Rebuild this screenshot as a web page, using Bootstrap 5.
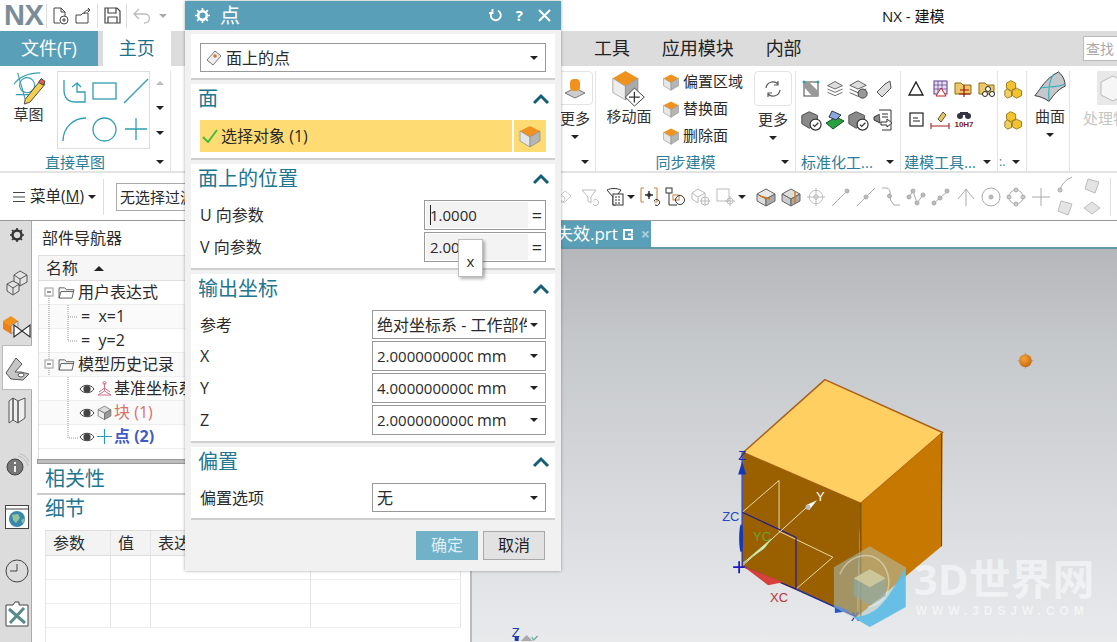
<!DOCTYPE html>
<html lang="zh">
<head>
<meta charset="utf-8">
<title>NX - 建模</title>
<link href="https://cdn.jsdelivr.net/npm/bootstrap@5.3.0/dist/css/bootstrap.min.css" rel="stylesheet">
<style>
html,body{margin:0;width:1117px;height:642px;overflow:hidden;background:#fff}
body,.app{font-family:"Open Sans","Noto Sans CJK SC",sans-serif;color:#2a2a2a;font-size:15px}
.app{position:relative;width:1117px;height:642px;overflow:hidden}
svg{display:block;flex:none}
.tbar{height:31px;background:#fff;align-items:center}
.nx-logo{font:bold 29px "Liberation Sans",sans-serif;color:#7b8c99;width:46px;padding-left:4px;letter-spacing:-.5px}
.tb-sep{width:1px;height:24px;background:#ddd;margin:0 6px}
.tb-new{margin-left:5px}
.tb-open{margin-left:6px}
.tb-sep2{margin:0 6px 0 5px}
.tb-title{position:absolute;left:882px;top:5px;font-size:15px;color:#111;line-height:22px}
.tabsrow{height:35px;background:#dcdcdc;align-items:stretch;font-size:18px}
.tab-file{width:98px;background:#5a9fb8;color:#fff;text-align:center;line-height:35px}
.tab-home{width:68px;margin-left:5px;background:#fff;color:#1f6f86;text-align:center;line-height:35px}
.tab-gap{width:424px}
.tab-item{line-height:35px;color:#222}
.t1{width:68px}.t2{width:104px}.t3{width:318px}
.findbox{width:34px;height:25px;margin-top:5px;background:#fff;border:1px solid #bbb;border-right:0;color:#aaa;font-size:14px;line-height:23px;padding-left:2px;overflow:hidden;white-space:nowrap}
.ribbon{height:107px;background:#fff;border-bottom:2px solid #e3e3e3}
.rg{display:flex;flex-direction:column;margin-top:5px;border-right:1px solid #e2e2e2;height:100px;flex:none}
.rb{flex:1;display:flex;min-height:0}
.rl{height:18px;display:flex;align-items:center;justify-content:center;color:#2d7d98;font-size:15px;line-height:18px;position:relative;white-space:nowrap}
.rl .crt{position:absolute;right:6px;top:7px}
.rl-pr{padding-right:20px}
.crt{display:inline-block;width:0;height:0;border-left:4px solid transparent;border-right:4px solid transparent;border-top:4px solid #222;flex:none}
.rlabel{font-size:15px;line-height:18px;text-align:center;color:#333}
.g0{width:171px;border-right:1px solid #e2e2e2}
.g-hide{width:384px;flex:none}
.g1{width:41px}.g2{width:200px}.g3{width:105px}.g4{width:97px}.g5{width:29px}.g6{width:43px}.g7{width:47px;border:0}
.igrid{display:grid;grid-auto-rows:31px;align-items:center;justify-items:center;padding-top:2px}
.ig3{grid-template-columns:24px 23px 23px 30px;padding-left:3px}
.ig4{grid-template-columns:repeat(4,24px);padding-left:3px}
.ig5{grid-template-columns:24px;padding-left:4px}
.morebtn{width:36px;height:34px;border:1px solid #e3e3e3;border-radius:4px;display:flex;align-items:center;justify-content:center}
.vcol{display:flex;flex-direction:column;align-items:center}
.gallery{width:93px;height:78px;border:1px solid #ddd;display:grid;grid-template-columns:repeat(3,31px);grid-auto-rows:38px;align-items:center;justify-items:center}
.syncline{display:flex;align-items:center;gap:3px;font-size:15px;height:27px;line-height:27px;white-space:nowrap}
.toolrow{height:48px;background:#fff;border-bottom:1px solid #999;align-items:center}
.menu-lab{font-size:15.5px;white-space:nowrap}
.filter{width:70px;height:28px;border:1px solid #aaa;margin-left:8px;font-size:15px;line-height:26px;padding-left:3px;overflow:hidden;white-space:nowrap;flex:none}
.toolicons{display:flex;align-items:center;margin-left:366px}
.tc{width:25px;display:flex;justify-content:center;flex:none}
.tc2{display:grid;grid-template-columns:27px 27px;grid-auto-rows:22px;justify-items:center;align-items:center;flex:none;margin-left:-2px}
.tvsep{width:1px;height:38px;background:#ddd;margin-left:5px;flex:none}
.main{height:421px;position:relative}
.side{width:32px;background:#dcdcdc;border-right:1px solid #aaa;flex:none}
.sbi{display:flex;align-items:center;justify-content:center;margin-left:2px}
.sbi.on{background:#fff;border:1px solid #bbb;border-right:0;margin-right:-1px;position:relative}
.s0{height:27px}.s1{height:48px;margin-top:11px}.s2{height:38px}.s3{height:45px}.s4{height:40px}.s5{height:46px;margin-top:12px}.s6{height:58px}.s7{height:50px}.s8{height:36px}
.navp{width:440px;flex:none;background:#fff;border-right:2px solid #bbb;display:flex;flex-direction:column;padding-left:6px}
.navh{height:34px;line-height:34px;padding-left:4px;font-size:16px}
.tree{height:204px;position:relative;border-left:1px solid #ddd;border-top:1px solid #ddd;flex:none}
.thead{height:25px;background:#f6f6f6;border-bottom:1px solid #ddd;display:flex;align-items:center;padding-left:7px;font-size:16px;gap:16px}
.tup{width:0;height:0;border-left:5px solid transparent;border-right:5px solid transparent;border-bottom:5px solid #222}
.trow{height:24px;border-bottom:1px solid #eee;display:flex;align-items:center;line-height:23px;font-size:16px;white-space:nowrap}
.trow.alt{background:#fafafa}
.p1{padding-left:19px;gap:3px}.p2{padding-left:42px;gap:7px}.p3{padding-left:40px;gap:1px}
.red{color:#d9706c}.blu{color:#3f5bc4;font-weight:700}
.splt{height:5px;background:#bdbdbd;border:1px solid #999;margin-left:-1px;flex:none}
.sec-head{color:#24758f;font-size:20px;line-height:26px;padding-left:7px;flex:none}
.sec-b1{height:31px;border-bottom:2px solid #ccc;margin-left:-1px;padding-left:8px;padding-top:2px}
.sec-b2{height:35px;padding-top:1px}
.dettable{margin-left:7px;margin-right:9px;flex:1;border-left:1px solid #e5e5e5;border-top:1px solid #ddd;position:relative;overflow:hidden}
.dr{display:grid;grid-template-columns:65px 40px 160px 1fr;height:24px;border-bottom:1px solid #eee}
.dr>div{border-right:1px solid #e5e5e5;padding-left:7px;line-height:24px;font-size:16px;overflow:hidden;white-space:nowrap}
.dr.hd{background:#f3f3f3;height:25px;border-bottom:1px solid #ddd}
.viewc{flex:1;display:flex;flex-direction:column;min-width:0}
.vtabs{height:26px;background:#fff;flex:none}
.vtab{width:179px;height:26px;background:#5a9fb8;color:#fff;font-size:17px;display:flex;align-items:center;justify-content:flex-end;padding-right:1px;gap:5px;white-space:nowrap;line-height:26px}
.vtab b{color:#a9cfdc;font-weight:700;font-size:16px;margin-left:2px}
.vbar{height:2px;background:#5d97a8;flex:none}
.view3d{flex:1;background:linear-gradient(#b5b7ba,#c6c9cc 25%,#e8eaec)}
.dlg{position:absolute;left:185px;top:1px;width:376px;height:570px;background:#f1f1f1;box-shadow:0 0 3px rgba(0,0,0,.35);z-index:5;display:flex;flex-direction:column}
.dlgh{height:29px;background:#5a9fb8;color:#fff;display:flex;align-items:center;padding:0 10px;font-size:20px;flex:none}
.dlgh .ttl{margin-left:10px;line-height:29px}
.dlgb{padding:4px 6px 0;display:flex;flex-direction:column;gap:4px;flex:none}
.dsec{background:#fff;border-bottom:2px solid #cfcfcf;padding:0 9px 6px}
.dsh{height:36px;display:flex;align-items:center;justify-content:space-between;color:#24758f;font-size:20px;margin-left:-2px;padding-bottom:6px}
.dsh svg{margin-right:-4px}
.drow{display:flex;align-items:center;justify-content:space-between;margin-bottom:2px;font-size:16px}
.drow:last-child{margin-bottom:0}
.dbox{height:30px;border:1px solid #999;background:#fff;display:flex;align-items:center;font-size:16px;white-space:nowrap;overflow:hidden}
.dbox .crt{margin-left:auto;margin-right:7px}
.w-full{width:100%;padding-left:5px}
.w-sel{width:174px;padding-left:4px}
.clipv{overflow:hidden;width:96px;flex:none;font-size:15px}
.clipr{overflow:hidden;width:150px;flex:none}
.w-in{width:122px;padding:1px 0 1px 1px}
.ifld{width:102px;height:26px;background:#f3f3f3;padding-left:4px;line-height:26px;flex:none;position:relative;font-size:15px}
.caretl{display:inline-block;width:1px;height:20px;background:#222;vertical-align:-4px;margin-right:-1px}
.eq{width:18px;text-align:center;flex:none;font-size:18px}
.selrow{height:32px;display:flex;gap:2px;margin-left:0}
.selmain{width:312px;background:#ffdc73;display:flex;align-items:center;padding-left:2px;gap:3px;font-size:16px}
.selbtn{width:32px;background:#ffdc73;display:flex;align-items:center;justify-content:center}
.dfoot{display:flex;justify-content:flex-end;gap:5px;padding:11px 16px 0 0}
.dbtn{width:62px;height:29px;font-size:16px;line-height:27px;text-align:center;padding:0;border-radius:0;border:1px solid #a9a9a9;background:#e2e2e2;color:#222}
.dbtn.ok{background:#72b2c9;border-color:#72b2c9;color:#dff0f6}
.ttip{position:absolute;left:273px;top:238px;width:25px;height:38px;background:#fff;border:1px solid #bbb;box-shadow:2px 2px 3px rgba(0,0,0,.3);text-align:center;line-height:42px;font-size:15px;z-index:6}
.sv3d{width:645px;height:392px}
.wm1{font:700 42px "Open Sans","Noto Sans CJK SC",sans-serif;fill:#fff;fill-opacity:.5}
.wm2{font:700 12px "Liberation Sans",sans-serif;fill:#fff;fill-opacity:.55;letter-spacing:5px}
.ax{font:13px "Liberation Sans",sans-serif}
</style>
</head>
<body>
<svg width="0" height="0" style="position:absolute">
 <defs>
  <symbol id="cube" viewBox="0 0 24 24"><path d="M12 2 22 7 12 13 2 7Z" fill="#f0921e"/><path d="M2 7 12 13V23L2 17Z" fill="#e6e6e6" stroke="#888" stroke-width=".7"/><path d="M22 7 12 13V23L22 17Z" fill="#b5b5b5" stroke="#888" stroke-width=".7"/></symbol>
  <symbol id="gcube" viewBox="0 0 24 24"><path d="M12 3 21 8 12 13 3 8Z" fill="#ddd" stroke="#666"/><path d="M3 8 12 13V22L3 17Z" fill="#eee" stroke="#666"/><path d="M21 8 12 13V22L21 17Z" fill="#999" stroke="#666"/></symbol>
  <symbol id="ycube" viewBox="0 0 24 24"><path d="M8 2l6 3v6l-6 3-5-3V5z" fill="#f4c430" stroke="#8a6d10"/><path d="M4 12l5 3v6l-5 2-3-3v-6z" fill="#f0d060" stroke="#8a6d10"/><path d="M15 11l6 3v6l-6 3-5-3v-6z" fill="#f4c430" stroke="#8a6d10"/></symbol>
  <symbol id="stack" viewBox="0 0 24 24" fill="#ddd" stroke="#555"><path d="M12 3 21 8 12 12 3 8Z"/><path d="M3 12 12 16 21 12" fill="none"/><path d="M3 16 12 20 21 16" fill="none"/></symbol>
  <symbol id="gbadge" viewBox="0 0 24 24"><path d="M10 3 19 7V16L10 21 2 16V7Z" fill="#8a8a8a" stroke="#444"/><circle cx="17" cy="17" r="6" fill="#fff" stroke="#333" stroke-width="1.3"/><path d="M14 17l2 2 4-4" fill="none" stroke="#333" stroke-width="1.3"/></symbol>
  <symbol id="eye" viewBox="0 0 16 12"><path d="M1 6C4 1 12 1 15 6 12 11 4 11 1 6Z" fill="#fff" stroke="#444"/><circle cx="8" cy="6" r="3.6" fill="#444"/></symbol>
  <symbol id="folder" viewBox="0 0 18 14" fill="none" stroke="#555"><path d="M1 13V2H7L9 4H17L15 13ZM1 13 3 6H17"/></symbol>
  <symbol id="chev" viewBox="0 0 18 12"><path d="M2 10 9 3 16 10" fill="none" stroke="#175f78" stroke-width="3"/></symbol>
  <symbol id="gcross" viewBox="0 0 24 24" fill="none" stroke="#aaa"><circle cx="12" cy="12" r="9"/><path d="M12 0V24M0 12H24"/><circle cx="12" cy="12" r="3"/></symbol>
 </defs>
</svg>
<div class="app">
 <div class="tbar d-flex">
  <div class="nx-logo">NX</div>
  <div class="tb-sep m-0"></div>
  <svg width="17" height="18" class="tb-new" viewBox="0 0 17 18" fill="none" stroke="#444"><path d="M2 1H9L13 5V9M9 1V5H13M8 16H2V1"/><circle cx="12" cy="13" r="4"/><path d="M10 13H14M12 11V15"/></svg>
  <svg width="17" height="18" class="tb-open" viewBox="0 0 17 18" fill="none" stroke="#444"><path d="M1 8H6L8 6H13V16H1Z"/><path d="M9 7C10 3 12 3 15 3M13 1l2 2-2 2"/></svg>
  <div class="tb-sep tb-sep2"></div>
  <svg width="17" height="17" viewBox="0 0 17 17" fill="none" stroke="#444" stroke-width="1.2"><path d="M1 1H13L16 4V16H1ZM4 1V6H12V1M4 16V10H13V16"/></svg>
  <div class="tb-sep tb-sep2"></div>
  <svg width="18" height="16" viewBox="0 0 18 16" fill="none" stroke="#bbb" stroke-width="1.3"><path d="M6 1 1 6 6 11M1 6H12C18 6 18 15 11 15"/></svg>
  <span class="crt ms-2" style="border-top-color:#aaa"></span>
 </div>
 <div class="tb-title">NX - 建模</div>
 <div class="tabsrow d-flex">
  <div class="tab-file">文件(F)</div>
  <div class="tab-home">主页</div>
  <div class="tab-gap"></div>
  <div class="tab-item t1">工具</div>
  <div class="tab-item t2">应用模块</div>
  <div class="tab-item t3">内部</div>
  <div class="findbox">查找</div>
 </div>
 <div class="ribbon d-flex">
  <div class="rg g0">
   <div class="rb">
    <div class="vcol" style="width:57px">
     <svg width="34" height="34" viewBox="0 0 36 36"><g fill="none" stroke="#3a9db0" stroke-width="1.2"><path d="M2 14C8 6 18 2 30 2"/><circle cx="16" cy="15" r="8"/><path d="M6 2 14 30M4 25H26"/></g><path d="M14 30 30 10 35 14 19 33 13 35Z" fill="#f5cf50" stroke="#444"/><path d="M28 12 31 8 35 11 33 15Z" fill="#d8605a" stroke="#444"/></svg>
     <div class="rlabel">草图</div>
    </div>
    <div class="gallery">
     <svg width="24" height="26" viewBox="0 0 24 26" fill="none" stroke="#2f9db2" stroke-width="1.3"><path d="M2 2V12Q2 24 14 24H23V14H15V5L10 9M15 5l4 4"/></svg>
     <svg width="25" height="18" viewBox="0 0 25 18" fill="none" stroke="#2f9db2" stroke-width="1.3"><rect x="1" y="1" width="23" height="16"/></svg>
     <svg width="26" height="26" viewBox="0 0 26 26" fill="none" stroke="#2f9db2" stroke-width="1.3"><path d="M1 25 25 1"/></svg>
     <svg width="26" height="26" viewBox="0 0 26 26" fill="none" stroke="#2f9db2" stroke-width="1.3"><path d="M2 25C2 12 12 2 25 2"/></svg>
     <svg width="25" height="25" viewBox="0 0 25 25" fill="none" stroke="#2f9db2" stroke-width="1.3"><circle cx="12.5" cy="12.5" r="11.5"/></svg>
     <svg width="22" height="22" viewBox="0 0 22 22" fill="none" stroke="#2f9db2" stroke-width="1.3"><path d="M11 0V22M0 11H22"/></svg>
    </div>
    <div class="vcol" style="width:20px;gap:21px;padding-top:10px">
     <span class="crt" style="transform:rotate(180deg);border-top-color:#bbb"></span>
     <span class="crt"></span>
     <span class="crt"></span>
    </div>
   </div>
   <div class="rl rl-pr">直接草图<span class="crt"></span></div>
  </div>
  <div class="g-hide"></div>
  <div class="rg g1">
   <div class="rb"><div class="vcol w-100">
    <div class="morebtn"><svg width="24" height="24" viewBox="0 0 24 24"><path d="M12 12 22 17 12 22 2 17Z" fill="#ccc" stroke="#777"/><rect x="7" y="3" width="10" height="12" rx="4" fill="#f0921e"/></svg></div>
    <div class="rlabel mt-1">更多</div><span class="crt mt-2"></span></div></div>
   <div class="rl"><span class="crt"></span></div>
  </div>
  <div class="rg g2">
   <div class="rb">
    <div class="vcol" style="width:66px">
     <svg width="36" height="36" viewBox="0 0 36 40"><path d="M14 0 28 8 14 17 0 8Z" fill="#f0921e"/><path d="M0 8 14 17V32L0 24Z" fill="#eee" stroke="#888" stroke-width=".7"/><path d="M28 8 14 17V32L28 24Z" fill="#aaa" stroke="#888" stroke-width=".7"/><path d="M24 19 35 29 24 39 14 29Z" fill="#fff" stroke="#333"/><path d="M24 23V35M18 29H30" stroke="#333" stroke-width="1.4"/></svg>
     <div class="rlabel">移动面</div>
    </div>
    <div style="width:92px;margin-top:-3px">
     <div class="syncline"><svg width="18" height="18"><use href="#cube"/></svg>偏置区域</div>
     <div class="syncline"><svg width="18" height="18"><use href="#cube"/></svg>替换面</div>
     <div class="syncline"><svg width="18" height="18"><use href="#cube"/></svg>删除面</div>
    </div>
    <div class="vcol" style="width:38px">
     <div class="morebtn" style="width:38px;height:35px"><svg width="16" height="18" viewBox="0 0 16 18" fill="none" stroke="#555" stroke-width="1.2"><path d="M1 8A7 7 0 0 1 13 4M15 10A7 7 0 0 1 3 14M13 1V5H9M3 17V13H7"/></svg></div>
     <div class="rlabel mt-1">更多</div><span class="crt mt-2"></span>
    </div>
   </div>
   <div class="rl rl-pr">同步建模<span class="crt"></span></div>
  </div>
  <div class="rg g3">
   <div class="rb"><div class="igrid ig3">
    <svg width="20" height="20" viewBox="0 0 20 20"><rect x="3" y="3" width="14" height="14" fill="none" stroke="#444"/><path d="M3 3H8L17 12V17H11L3 8Z" fill="#999"/><circle cx="3" cy="3" r="1.5" fill="#2f9db2"/><circle cx="17" cy="3" r="1.5" fill="#2f9db2"/></svg>
    <svg width="20" height="20"><use href="#stack"/></svg>
    <svg width="22" height="22" viewBox="0 0 24 24"><use href="#stack"/><circle cx="17" cy="17" r="5" fill="#999" stroke="#333"/></svg>
    <svg width="18" height="20" viewBox="0 0 18 20" fill="#ddd" stroke="#555"><path d="M10 5 15 2 16 9 7 18 2 13Z"/></svg>
    <svg width="22" height="22"><use href="#gbadge"/></svg>
    <svg width="22" height="22" viewBox="0 0 22 22"><path d="M2 14 9 20 20 12 12 8Z" fill="#2aa040" stroke="#0a5a1c"/><path d="M8 2 17 6 12 11 5 8Z" fill="#8ca6e0" stroke="#334"/></svg>
    <svg width="22" height="22"><use href="#gbadge"/></svg>
    <svg width="22" height="22" viewBox="0 0 22 22" fill="#fff" stroke="#333"><path d="M1 8 7 5V14L1 11Z" fill="#888"/><path d="M6 1H18V21H9"/><path d="M9 5H15M9 8H15M8 13H14V10L19 14 14 18V16H8Z" fill="#fff"/></svg>
   </div></div>
   <div class="rl" style="justify-content:flex-start;padding-left:5px">标准化工...<span class="crt"></span></div>
  </div>
  <div class="rg g4">
   <div class="rb"><div class="igrid ig4">
    <svg width="16" height="15" viewBox="0 0 16 15" fill="none" stroke="#222" stroke-width="1.4"><path d="M8 1 15 14H1Z"/></svg>
    <svg width="15" height="17" viewBox="0 0 15 17"><rect x="1" y="1" width="13" height="13" fill="#e8e0f0" stroke="#5a3a8c"/><path d="M1 5H14M1 9H14M5 1V14M9 1V14" stroke="#5a3a8c" stroke-width=".7"/><path d="M8 8 13 16H3Z" fill="#fff" stroke="#c02020"/></svg>
    <svg width="20" height="18" viewBox="0 0 20 18"><path d="M1 3H7L9 5H17V14H1Z" fill="#ecc868" stroke="#8a6d10"/><path d="M10 5V17M6 10H15M5 14H16" stroke="#a01010" stroke-width="1.2"/></svg>
    <svg width="20" height="18" viewBox="0 0 20 18"><path d="M1 3H7L9 5H16V14H1Z" fill="#ecc868" stroke="#8a6d10"/><circle cx="10" cy="9" r="2.5" fill="#fff" stroke="#222"/><circle cx="7" cy="14" r="2.5" fill="#fff" stroke="#222"/><circle cx="14" cy="14" r="2.5" fill="#fff" stroke="#222"/></svg>
    <svg width="15" height="15" viewBox="0 0 15 15" fill="none" stroke="#222" stroke-width="1.2"><rect x="1" y="1" width="13" height="13"/><path d="M4 6H9M4 9H11"/></svg>
    <svg width="20" height="20" viewBox="0 0 20 20"><path d="M13 2 16 5 11 12 8 9Z" fill="#e8c860" stroke="#554"/><path d="M1 13V19M19 13V19M1 16H19" stroke="#a02020" stroke-width="1.1"/></svg>
    <div class="text-center" style="font:bold 8px/9px 'Liberation Sans',sans-serif;color:#7a1c1c"><svg width="14" height="9" class="mx-auto" viewBox="0 0 14 9" fill="#334"><circle cx="3" cy="5" r="3"/><circle cx="11" cy="5" r="3"/><rect x="3" y="1" width="8" height="3"/></svg>10H7</div>
    <span></span>
   </div></div>
   <div class="rl" style="justify-content:flex-start;padding-left:3px">建模工具...<span class="crt"></span></div>
  </div>
  <div class="rg g5">
   <div class="rb"><div class="igrid ig5"><svg width="20" height="20"><use href="#ycube"/></svg><svg width="20" height="20"><use href="#ycube"/></svg></div></div>
   <div class="rl" style="justify-content:flex-start;padding-left:1px"><span style="font-size:12px">:.</span><span class="crt"></span></div>
  </div>
  <div class="rg g6">
   <div class="rb"><div class="vcol w-100 ps-1">
    <svg width="34" height="36" viewBox="0 0 34 38"><path d="M1 26C8 18 12 8 26 1 32 6 33 12 33 16 24 20 19 28 16 32 10 28 6 27 1 26Z" fill="#c4c8cc" stroke="#333"/><path d="M7 18C14 16 24 18 32 14M20 4C16 12 15 22 16 31" fill="none" stroke="#2fb0c4" stroke-width="1.2"/></svg>
    <div class="rlabel">曲面</div><span class="crt mt-2"></span></div></div>
  </div>
  <div class="rg g7">
   <div class="rb"><div class="vcol" style="padding-left:27px;align-items:flex-start;white-space:nowrap">
    <svg width="32" height="34" viewBox="0 0 32 34"><rect width="32" height="34" fill="#e8e8e8"/><path d="M16 5 28 11V24L16 30 4 24V11Z" fill="#f6f6f6" stroke="#bbb"/></svg>
    <div class="rlabel mt-1" style="color:#c5c5c5;margin-left:-14px">处理特征</div></div></div>
  </div>
 </div>
 <div class="toolrow d-flex">
  <svg width="14" height="12" style="margin-left:12px" viewBox="0 0 14 12" stroke="#444"><path d="M1 1.500H13M1 6H13M1 10.500H13"/></svg>
  <span class="menu-lab" style="margin-left:4px">菜单(<u>M</u>)</span><span class="crt ms-1"></span>
  <div class="tb-sep" style="height:36px;margin:0 0 0 7px"></div>
  <div class="filter" style="margin-left:12px">无选择过滤器</div>
  <div class="toolicons">
   <div class="tc"><svg width="18" height="18" viewBox="0 0 18 18" fill="none" stroke="#ccc"><path d="M2 10 9 3 15 8 8 15Z"/><circle cx="6" cy="11" r="3"/></svg></div>
   <div class="tc"><svg width="18" height="18" viewBox="0 0 18 18" fill="none" stroke="#bbb"><path d="M1 2H15L10 9V15L7 13V9Z"/><path d="M13 12A3 3 0 1 1 12 16"/></svg></div>
   <div class="tc"><svg width="18" height="18" viewBox="0 0 18 18" fill="#fff" stroke="#333"><path d="M1 2C5 0 11 0 15 2L10 9V17H7V9Z"/><rect x="7" y="6" width="10" height="11"/><path d="M9 9H15M9 12H15M9 15H15" stroke-dasharray="2 1"/></svg></div>
   <span class="crt"></span>
   <div class="tc" style="margin-left:3px"><svg width="22" height="20" viewBox="0 0 22 20" fill="none"><path d="M4 1H1V15H4M14 1H17V15H14" stroke="#c08040"/><path d="M9 4V12M5 8H13" stroke="#333" stroke-width="1.5"/><circle cx="9" cy="8" r="2" fill="#333"/><path d="M14 14A3 3 0 1 1 15 18" stroke="#333"/></svg></div>
   <div class="tc"><svg width="22" height="20" viewBox="0 0 22 20" fill="none" stroke="#333"><rect x="1" y="1" width="6" height="5"/><path d="M4 6V18H12"/><rect x="8" y="8" width="6" height="5" stroke="#c08040"/><circle cx="15" cy="13" r="4.5"/></svg></div>
   <div class="tc"><svg width="20" height="18" viewBox="0 0 20 18" fill="none" stroke="#bbb"><path d="M7 1 14 5 7 9 1 5ZM1 5V11L7 15V9M14 5V8"/><circle cx="14" cy="13" r="4"/><path d="M14 8V18M9 13H19"/></svg></div>
   <div class="tc"><svg width="20" height="18" viewBox="0 0 20 18" fill="none" stroke="#bbb"><rect x="1" y="1" width="12" height="12"/><circle cx="14" cy="13" r="3"/><path d="M14 8V18M9 13H19"/></svg></div>
   <span class="crt"></span>
   <div class="tc" style="margin-left:7px"><svg width="22" height="22" viewBox="0 0 22 22"><path d="M11 3 20 8 11 13 2 8Z" fill="#e8e8e8" stroke="#666"/><path d="M2 8 11 13V20L2 15Z" fill="#ddd" stroke="#666"/><path d="M20 8 11 13V20L20 15Z" fill="#aaa" stroke="#666"/><path d="M5 10 15 13" stroke="#d07a1e" stroke-width="1.5"/></svg></div>
   <div class="tc"><svg width="22" height="22" viewBox="0 0 22 22"><path d="M11 3 20 8 11 13 2 8Z" fill="#ddd" stroke="#666"/><path d="M2 8 11 13V20L2 15Z" fill="#ccc" stroke="#666"/><path d="M20 8 11 13V20L20 15Z" fill="#aaa" stroke="#666"/><path d="M15 5V17" stroke="#d07a1e" stroke-width="1.5"/></svg></div>
   <div class="tc"><svg width="18" height="18"><use href="#gcross"/></svg></div>
   <div class="tc"><svg width="20" height="20" viewBox="0 0 20 20" stroke="#aaa" fill="#bbb"><path d="M1 19 16 4"/><circle cx="16" cy="4" r="2"/></svg></div>
   <div class="tc"><svg width="20" height="20" viewBox="0 0 20 20" stroke="#aaa" fill="#bbb"><path d="M1 19 19 1"/><circle cx="10" cy="10" r="2"/></svg></div>
   <div class="tc"><svg width="20" height="20" viewBox="0 0 20 20" stroke="#aaa" fill="none"><path d="M1 1H5Q10 1 9 8 8 13 13 18H19"/><circle cx="8.500" cy="9" r="2" fill="#bbb"/></svg></div>
   <div class="tc"><svg width="20" height="18" viewBox="0 0 20 18" stroke="#aaa" fill="#bbb"><path d="M3 9 7 3 11 15 17 7" fill="none"/><circle cx="3" cy="9" r="2"/><circle cx="7" cy="3" r="2"/><circle cx="11" cy="15" r="2"/><circle cx="17" cy="7" r="2"/></svg></div>
   <div class="tc"><svg width="20" height="18" viewBox="0 0 20 18" stroke="#aaa" fill="#bbb"><path d="M2 16 18 2" fill="none"/><circle cx="3" cy="15" r="2"/><circle cx="9" cy="10" r="2"/><circle cx="16" cy="3" r="2"/></svg></div>
   <div class="tc"><svg width="20" height="20" viewBox="0 0 20 20" stroke="#aaa" fill="none"><path d="M10 19V2M2 12Q8 5 10 2 12 5 18 12"/></svg></div>
   <div class="tc"><svg width="20" height="20" viewBox="0 0 20 20" stroke="#aaa" fill="none"><circle cx="10" cy="10" r="9"/><circle cx="10" cy="10" r="2" fill="#bbb"/></svg></div>
   <div class="tc"><svg width="20" height="20" viewBox="0 0 20 20" stroke="#aaa" fill="#ccc"><circle cx="10" cy="10" r="7" fill="none"/><circle cx="10" cy="3" r="2"/><circle cx="3" cy="10" r="2"/><circle cx="17" cy="10" r="2"/><circle cx="10" cy="17" r="2"/></svg></div>
   <div class="tc"><svg width="18" height="18" viewBox="0 0 18 18" stroke="#aaa"><path d="M9 0V18M0 9H18"/></svg></div>
   <div class="tc2">
    <svg width="16" height="20" viewBox="0 0 16 20" stroke="#aaa" fill="#ccc"><path d="M15 1Q4 6 3 15" fill="none"/><circle cx="3" cy="14" r="2"/></svg>
    <svg width="18" height="18" viewBox="0 0 18 18" stroke="#bbb" fill="#e4e4e4"><path d="M5 2 16 5 12 16 2 12Z"/></svg>
    <svg width="18" height="18" viewBox="0 0 18 18" stroke="#bbb" fill="#e4e4e4"><path d="M5 2 16 5 12 16 2 12Z"/></svg>
    <svg width="18" height="14" viewBox="0 0 18 14" stroke="#bbb" fill="#e4e4e4"><path d="M9 1 17 7 9 13 1 7Z"/></svg>
   </div>
   <div class="tvsep"></div>
  </div>
 </div>
 <div class="main d-flex">
  <div class="side">
   <div class="sbi s0"><svg width="14" height="14" viewBox="0 0 14 14"><circle cx="7" cy="7" r="4.500" fill="none" stroke="#333" stroke-width="2.400"/><path d="M7 0V3M7 11V14M0 7H3M11 7H14M2 2 4 4M10 10 12 12M12 2 10 4M4 10 2 12" stroke="#333" stroke-width="1.600"/></svg></div>
   <div class="sbi s1"><svg width="22" height="26" viewBox="0 0 22 26"><path d="M14 1 21 5V12L14 16 8 12V5Z" fill="#e4e4e4" stroke="#555"/><path d="M8 5 14 9 21 5M14 9V16" fill="none" stroke="#555"/><path d="M7 11 13 14V21L7 25 1 21V14Z" fill="#e4e4e4" stroke="#555"/><path d="M1 14 7 18 13 14M7 18V25" fill="none" stroke="#555"/></svg></div>
   <div class="sbi s2"><svg width="30" height="26" viewBox="0 0 30 26"><path d="M1 8 9 3 16 8 9 13Z" fill="#f0921e"/><path d="M1 8 9 13V21L1 16Z" fill="#ee8310"/><path d="M9 13 16 8V16L9 21Z" fill="#ddd" stroke="#666" stroke-width=".6"/><path d="M12 24V12L28 24V12Z" fill="#fff" stroke="#222" stroke-width="1.100"/></svg></div>
   <div class="sbi s3 on"><svg width="26" height="26" viewBox="0 0 26 26"><path d="M1 18 11 3 17 9 10 17H16L24 19 18 25 6 24Z" fill="#c6c6c6" stroke="#555"/><ellipse cx="16" cy="20" rx="3" ry="2" fill="#fff" stroke="#555"/></svg></div>
   <div class="sbi s4"><svg width="20" height="28" viewBox="0 0 20 28" fill="#eee" stroke="#555"><path d="M2 5 6 2V24L2 27ZM6 2 11 5V27L6 24ZM11 5 18 2V22L11 27Z"/></svg></div>
   <div class="sbi s5"><svg width="24" height="24" viewBox="0 0 24 24"><circle cx="10" cy="14" r="8" fill="#777" stroke="#444"/><rect x="9" y="13" width="2" height="6" fill="#eee"/><rect x="9" y="9" width="2" height="2" fill="#eee"/><path d="M13 3C18 4 22 8 23 13M15 1C20 2 23 6 24 9" fill="none" stroke="#bbb"/></svg></div>
   <div class="sbi s6"><svg width="24" height="24" viewBox="0 0 24 24"><rect x=".5" y=".5" width="23" height="23" fill="#fff" stroke="#444"/><path d="M1 4H23" stroke="#444"/><circle cx="12" cy="14" r="8" fill="#3a88ac"/><path d="M7 10 13 9 15 13 11 18 8 15ZM16 15 20 13 18 19Z" fill="#8fc49a"/></svg></div>
   <div class="sbi s7"><svg width="24" height="24" viewBox="0 0 24 24" fill="none" stroke="#444"><circle cx="12" cy="12" r="11"/><path d="M12 5V12H5"/></svg></div>
   <div class="sbi s8"><svg width="24" height="26" viewBox="0 0 24 26"><path d="M1 4H8L10 1H14V4H23V25H1Z" fill="#fff" stroke="#444"/><path d="M4 8 20 22M19 7 5 22" stroke="#5a8a8a" stroke-width="3"/></svg></div>
  </div>
  <div class="navp">
   <div class="navh">部件导航器</div>
   <div class="tree">
    <svg class="position-absolute top-0 start-0" width="60" height="190" viewBox="0 0 60 190" fill="none" stroke="#999" stroke-dasharray="1 1"><path d="M10 36V120M29 49V85H39M29 121V182H39M29 61H39"/><rect x="6" y="32" width="8" height="8" fill="#fff" stroke-dasharray="none"/><rect x="6" y="104" width="8" height="8" fill="#fff" stroke-dasharray="none"/><path d="M8 36H12M8 108H12" stroke="#333" stroke-dasharray="none"/></svg>
    <div class="thead"><span>名称</span><span class="tup"></span></div>
    <div class="trow p1"><svg width="17" height="13"><use href="#folder"/></svg>用户表达式</div>
    <div class="trow p2 alt">= &nbsp;x=1</div>
    <div class="trow p2">= &nbsp;y=2</div>
    <div class="trow p1 alt"><svg width="17" height="13"><use href="#folder"/></svg>模型历史记录</div>
    <div class="trow p3"><svg width="16" height="12"><use href="#eye"/></svg><svg width="17" height="17" viewBox="0 0 17 17" fill="none" stroke="#d2708c"><path d="M8.500 3V11M8.500 11 2 15M8.500 11 15 15M3 12 8.500 8 14 12M2 15H15"/><circle cx="8.500" cy="3" r="1.500"/></svg>基准坐标系</div>
    <div class="trow p3 alt"><svg width="16" height="12"><use href="#eye"/></svg><svg width="17" height="17" viewBox="0 0 24 24"><use href="#gcube"/></svg><span class="red">块 (1)</span></div>
    <div class="trow p3"><svg width="16" height="12"><use href="#eye"/></svg><svg width="17" height="17" viewBox="0 0 17 17" stroke="#2a9db0" stroke-width="1.200"><path d="M8.500 1V16M1 8.500H16"/></svg><span class="blu">点 (2)</span></div>
   </div>
   <div class="splt"></div>
   <div class="sec-head sec-b1">相关性</div>
   <div class="sec-head sec-b2">细节</div>
   <div class="dettable">
    <div class="dr hd"><div>参数</div><div>值</div><div>表达式</div><div></div></div>
    <div class="dr"><div></div><div></div><div></div><div></div></div>
    <div class="dr"><div></div><div></div><div></div><div></div></div>
    <div class="dr"><div></div><div></div><div></div><div></div></div>
   </div>
  </div>
  <div class="viewc">
   <div class="vtabs"><div class="vtab"><span>失效.prt</span><svg width="11" height="11" viewBox="0 0 11 11" fill="none" stroke="#fff" stroke-width="1.800"><path d="M9 4V1H1V10H9V7M5 5.500H10"/></svg><b>×</b></div></div>
   <div class="vbar"></div>
   <div class="view3d">
    <svg class="sv3d" viewBox="472 249 645 393">
     <defs>
      <radialGradient id="ball" cx=".4" cy=".35" r=".8"><stop offset="0" stop-color="#f6a23a"/><stop offset="1" stop-color="#bd5f08"/></radialGradient>
     </defs>
     <path d="M1026 353V369M1018 361H1034" stroke="#888" stroke-width=".6"/>
     <circle cx="1026" cy="361" r="6.500" fill="url(#ball)"/>
     <path d="M825 380 943 433 861 504 743 453Z" fill="#ffcf62" stroke="#a8601a" stroke-width="1.500" stroke-linejoin="round"/>
     <path d="M743 453 861 504 857 618 742 567Z" fill="#9a6000"/>
     <path d="M861 504 943 433 942 547 857 618Z" fill="#c67800"/>
     <path d="M861 504V618M942 434V547" stroke="#4a3000" stroke-width=".8"/>
     <path d="M742 513 779 481V532L833 558 796 590" fill="none" stroke="#e8d8a8"/>
     <path d="M742 513 796 538V590L742 567" fill="none" stroke="#221a90" stroke-width="1.200"/>
     <path d="M796 590 855 617" stroke="#1c2ab0" stroke-width="1.400"/>
     <path d="M742 453V567" stroke="#1c2ab0" stroke-width="1.200"/>
     <path d="M742 462 746 475H738Z" fill="#1636b8"/>
     <ellipse cx="741" cy="539" rx="2" ry="14" fill="#1636b8"/>
     <path d="M733 568H745M739 562V574" stroke="#1c1cc0" stroke-width="1.800"/>
     <path d="M743 566 810 505" stroke="#e8e0c8"/>
     <path d="M817 501 806 506 809 511Z" fill="#fff"/><circle cx="808" cy="508" r="2.500" fill="#bbb"/>
     <path d="M743 564 771 540 764 549Z" fill="#d8f0c0" stroke="#bde0a0"/>
     <path d="M743 567 783 583 768 586Z" fill="#d8403c"/>
     <path d="M835 606 850 612 835 614Z" fill="#2455cc"/>
     <text x="816" y="502" class="ax" fill="#fff">Y</text>
     <text x="753" y="542" class="ax" fill="#6da030">YC</text>
     <text x="770" y="603" class="ax" fill="#b6363a">XC</text>
     <text x="722" y="522" class="ax" fill="#2848c0">ZC</text>
     <text x="738" y="461" class="ax" fill="#1c2ab0">Z</text>
     <text x="851" y="622" class="ax" fill="#1c2ab0">X</text>
     <text x="511" y="638" class="ax" fill="#1c3ab0">Z</text>
     <path d="M514 642V638H518V642Z" fill="#1c3ab0"/><path d="M520 642 526 636 532 642Z" fill="#aaa"/><path d="M531 638l2 3 4-4" fill="none" stroke="#6a9" stroke-width="1.200"/>
     <path d="M870 547 906 568V608L870 628 834 608V568Z" fill="#aac8c8" fill-opacity=".5"/>
     <path d="M906 568V608L870 628 853 618C880 618 890 595 906 568Z" fill="#5cbde8" fill-opacity=".9"/>
     <path d="M840 575C850 552 880 548 888 575 892 590 885 605 868 608" fill="none" stroke="#fff" stroke-opacity=".4" stroke-width="1.500"/>
     <path d="M870 570 886 579V597L870 606 854 597V579Z" fill="#8eaaa4" fill-opacity=".7"/>
     <path d="M870 570 886 579 870 588 854 579Z" fill="#d8cf9c" fill-opacity=".8"/>
     <text x="914" y="596" class="wm1">3D世界网</text>
     <text x="916" y="616" class="wm2">WWW.3DSJW.COM</text>
    </svg>
   </div>
  </div>
 </div>

 <div class="dlg">
  <div class="dlgh">
   <svg width="15" height="15" viewBox="0 0 14 14"><circle cx="7" cy="7" r="4" fill="none" stroke="#fff" stroke-width="2.400"/><path d="M7 0V3M7 11V14M0 7H3M11 7H14M2 2 4 4M10 10 12 12M12 2 10 4M4 10 2 12" stroke="#fff" stroke-width="1.600"/></svg>
   <span class="ttl">点</span>
   <svg class="ms-auto" width="13" height="13" viewBox="0 0 13 13" fill="none" stroke="#fff" stroke-width="1.800"><path d="M3.500 2.500A5 5 0 1 0 9 1.800M3.500 0V4H0"/></svg>
   <span class="fw-bold" style="margin:0 15px 0 14px;font-size:15px">?</span>
   <svg width="13" height="13" viewBox="0 0 13 13" stroke="#fff" stroke-width="2"><path d="M1 1 12 12M12 1 1 12"/></svg>
  </div>
  <div class="dlgb">
   <div class="dsec" style="padding-top:9px;padding-bottom:6px">
    <div class="dbox w-full" style="height:29px"><svg width="16" height="16" class="me-1" viewBox="0 0 16 16"><path d="M9 1 15 6 7 15 1 10Z" fill="#eee" stroke="#777"/><circle cx="9" cy="6" r="1.800" fill="#e07030"/></svg>面上的点<span class="crt"></span></div>
   </div>
   <div class="dsec">
    <div class="dsh">面<svg width="18" height="12"><use href="#chev"/></svg></div>
    <div class="selrow"><div class="selmain"><svg width="16" height="14" viewBox="0 0 16 14" fill="none" stroke="#3fbf3f" stroke-width="2"><path d="M1 8 6 13 15 1"/></svg>选择对象 (1)</div><div class="selbtn"><svg width="24" height="24"><use href="#cube"/></svg></div></div>
   </div>
   <div class="dsec">
    <div class="dsh">面上的位置<svg width="18" height="12"><use href="#chev"/></svg></div>
    <div class="drow"><span>U 向参数</span><div class="dbox w-in"><div class="ifld"><span class="caretl"></span>1.0000</div><div class="eq">=</div></div></div>
    <div class="drow"><span>V 向参数</span><div class="dbox w-in"><div class="ifld">2.0000</div><div class="eq">=</div></div></div>
   </div>
   <div class="dsec">
    <div class="dsh">输出坐标<svg width="18" height="12"><use href="#chev"/></svg></div>
    <div class="drow"><span>参考</span><div class="dbox w-sel" style="height:29px"><span class="clipr">绝对坐标系 - 工作部件</span><span class="crt"></span></div></div>
    <div class="drow"><span>X</span><div class="dbox w-sel"><span class="clipv">2.00000000000</span><span class="ms-1">mm</span><span class="crt"></span></div></div>
    <div class="drow"><span>Y</span><div class="dbox w-sel"><span class="clipv">4.00000000000</span><span class="ms-1">mm</span><span class="crt"></span></div></div>
    <div class="drow"><span>Z</span><div class="dbox w-sel"><span class="clipv">2.00000000000</span><span class="ms-1">mm</span><span class="crt"></span></div></div>
   </div>
   <div class="dsec">
    <div class="dsh">偏置<svg width="18" height="12"><use href="#chev"/></svg></div>
    <div class="drow"><span>偏置选项</span><div class="dbox w-sel" style="height:29px"><span>无</span><span class="crt"></span></div></div>
   </div>
  </div>
  <div class="dfoot"><button type="button" class="btn dbtn ok">确定</button><button type="button" class="btn dbtn">取消</button></div>
  <div class="ttip">x</div>
 </div>
</div>
</body>
</html>
